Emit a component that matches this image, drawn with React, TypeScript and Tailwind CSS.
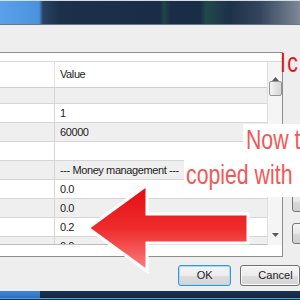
import React from "react";

const rows: { v: string; gray: boolean; h: string }[] = [
  { v: "", gray: true, h: "h-[16px]" },
  { v: "1", gray: false, h: "h-[19px]" },
  { v: "60000", gray: true, h: "h-[19px]" },
  { v: "", gray: false, h: "h-[19px]" },
  { v: "--- Money management ---", gray: true, h: "h-[19px]" },
  { v: "0.0", gray: false, h: "h-[19px]" },
  { v: "0.0", gray: true, h: "h-[19px]" },
  { v: "0.2", gray: false, h: "h-[19px]" },
];

function Row({ v, gray, h }: { v: string; gray: boolean; h: string }) {
  return (
    <div className={`flex ${h} border-b border-[#d6d6d6] ${gray ? "bg-[#efefef]" : "bg-white"}`}>
      <div className="w-[55px] shrink-0 border-r border-[#d6d6d6]" />
      <div className="flex-1 pl-[5px] flex items-center text-[11px] tracking-[-0.4px] text-[#222] whitespace-nowrap overflow-hidden">
        {v}
      </div>
    </div>
  );
}

export default function App() {
  return (
    <div className="relative w-[300px] h-[300px] overflow-hidden bg-[#eeeeee] font-['Liberation_Sans',Arial,sans-serif]">
      {/* title bar */}
      <div className="h-[1px] bg-[#d5dce4]" />
      <div className="h-[23px] bg-[linear-gradient(to_right,#5aa0ea_0px,#4b92de_39px,#2a4262_43px,#1c3049_60px,#1a2d46_160px,#1f4747_164px,#1a2d46_171px,#1a2d46_200px,#1e4a48_206px,#203f4d_216px,#1d3149_230px,#34465e_260px,#6a7889_290px,#7f8a99_300px)]" />
      <div className="h-[1px] bg-[#6a7686]" />

      {/* body spacing */}
      <div className="h-[27px]" />

      <div className="flex">
        {/* grid */}
        <div className="w-[283px] shrink-0 border-t border-b border-r border-[#8d8d8d] bg-white">
          <div className="h-[9px] bg-white border-b border-[#d9d9d9]" />
          <div className="flex">
            <div className="w-[267px] shrink-0">
              {/* header */}
              <div className="flex h-[26px] border-b border-[#cfcfcf] bg-white">
                <div className="w-[55px] shrink-0 border-r border-[#e2e2e2]" />
                <div className="flex-1 pl-[5px] flex items-center text-[11px] tracking-[-0.4px] text-[#222]">
                  Value
                </div>
              </div>
              {rows.map((r, i) => (
                <Row key={i} {...r} />
              ))}
              {/* partial row */}
              <div className="flex h-[8px] border-b border-[#bdbdbd] bg-[#efefef] overflow-hidden">
                <div className="w-[55px] shrink-0 border-r border-[#d6d6d6]" />
                <div className="flex-1 pl-[5px] pt-[4px] text-[11px] leading-[11px] tracking-[-0.4px] text-[#222]">
                  0.0
                </div>
              </div>
            </div>
            {/* scrollbar */}
            <div className="w-[15px] shrink-0 border-l border-[#e0e0e0] bg-[#f5f5f5] flex flex-col items-center">
              <div className="h-[19px] flex items-end justify-center">
                <svg width="7" height="4" viewBox="0 0 7 4">
                  <path d="M0 4 L3.5 0 L7 4 Z" fill="#5a5a5a" />
                </svg>
              </div>
              <div className="mt-[0px] w-[13px] h-[15px] rounded-[2px] border border-[#959595] bg-[linear-gradient(to_right,#f4f4f4,#e4e4e4_50%,#d6d6d6)]" />
              <div className="flex-1" />
              <div className="h-[12px] flex items-start justify-center">
                <svg width="7" height="4" viewBox="0 0 7 4">
                  <path d="M0 0 L3.5 4 L7 0 Z" fill="#5a5a5a" />
                </svg>
              </div>
            </div>
          </div>
          <div className="h-[11px] bg-white" />
        </div>

        {/* side buttons */}
        <div className="flex flex-col pl-[9px] pt-[139px] gap-[11px]">
          <div className="w-[30px] h-[21px] rounded-[3px] border border-[#777] bg-[linear-gradient(#f4f4f4,#e6e6e6_50%,#d8d8d8_51%,#cfcfcf)]" />
          <div className="w-[30px] h-[21px] rounded-[3px] border border-[#777] bg-[linear-gradient(#f4f4f4,#e6e6e6_50%,#d8d8d8_51%,#cfcfcf)]" />
        </div>
      </div>

      {/* bottom buttons */}
      <div className="flex pl-[178px] gap-[9px] pt-[8px]">
        <div className="w-[69px] h-[21px] rounded-[3px] border border-[#3a93d6] shadow-[inset_0_0_0_1px_#a6dcf7] bg-[linear-gradient(#f4f4f4,#ececec_50%,#dedede_51%,#d4d4d4)] flex items-center justify-center text-[11px] text-[#222]">
          OK
        </div>
        <div className="w-[72px] h-[21px] rounded-[3px] border border-[#707070] shadow-[inset_0_0_0_1px_#fbfbfb] bg-[linear-gradient(#f4f4f4,#ececec_50%,#dedede_51%,#d4d4d4)] flex items-center pl-[17px] text-[11px] text-[#222]">
          Cancel
        </div>
      </div>

      {/* taskbar */}
      <div className="absolute left-0 right-0 top-[291px] h-[9px] bg-[#152740]">
        <div className="flex h-[7px]">
          <div className="w-[40px] bg-[linear-gradient(#3f86d8,#2f6fc0)]" />
          <div className="flex-1 bg-[linear-gradient(#1c3350,#142640)]" />
        </div>
        <div className="h-[1px] bg-[#2ab3ea]" />
      </div>

      {/* annotation: arrow */}
      <svg className="absolute left-0 top-0" width="300" height="300" viewBox="0 0 300 300">
        <defs>
          <linearGradient id="ag" x1="0" y1="185" x2="0" y2="272" gradientUnits="userSpaceOnUse">
            <stop offset="0" stopColor="#e20d10" />
            <stop offset="0.5" stopColor="#ee2b2b" />
            <stop offset="1" stopColor="#fb8484" />
          </linearGradient>
        </defs>
        <polygon
          points="88,228 147,185 147,214 248,214 248,243 147,243 147,271"
          fill="url(#ag)"
          stroke="#ffffff"
          strokeWidth="3"
          strokeLinejoin="miter"
        />
      </svg>

      {/* annotation texts */}
      <div className="absolute left-[280px] top-[49px] text-[28px] leading-[28px] text-[#e3161b] whitespace-nowrap origin-left scale-x-[0.76] [word-spacing:-6px]">
        I c
      </div>
      <div className="absolute left-[243px] top-[124px] w-[60px] h-[36px] bg-white" />
      <div className="absolute left-[184px] top-[160px] w-[120px] h-[37px] bg-white" />
      <div className="absolute left-[246px] top-[126px] text-[28px] leading-[28px] text-[#f25858] whitespace-nowrap origin-left scale-x-[0.76]">
        Now to
      </div>
      <div className="absolute left-[186px] top-[161px] text-[28px] leading-[28px] text-[#f25858] whitespace-nowrap origin-left scale-x-[0.76]">
        copied with
      </div>
    </div>
  );
}
